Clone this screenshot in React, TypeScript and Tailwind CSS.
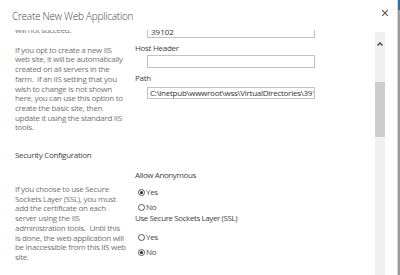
import React from "react";

const webSiteHelp = [
  "If you opt to create a new IIS",
  "web site, it will be automatically",
  "created on all servers in the",
  "farm.  If an IIS setting that you",
  "wish to change is not shown",
  "here, you can use this option to",
  "create the basic site, then",
  "update it using the standard IIS",
  "tools.",
];

const sslHelp = [
  "If you choose to use Secure",
  "Sockets Layer (SSL), you must",
  "add the certificate on each",
  "server using the IIS",
  "administration tools.  Until this",
  "is done, the web application will",
  "be inaccessible from this IIS web",
  "site.",
];

function Radio({ label, checked }: { label: string; checked?: boolean }) {
  return (
    <div className="flex items-center h-[14px] pl-[3px]">
      <span className="w-[7px] h-[7px] rounded-full border border-[#555] flex items-center justify-center bg-white">
        {checked && <span className="w-[3px] h-[3px] rounded-full bg-[#222]" />}
      </span>
      <span className="ml-[1px] text-[8px] tracking-[-0.3px] leading-[10px] text-[#444]">{label}</span>
    </div>
  );
}

function HelpLines({ lines }: { lines: string[] }) {
  return (
    <div className="text-[8px] tracking-[-0.3px] leading-[9.7px] text-[#747474] whitespace-pre">
      {lines.map((l, i) => (
        <div key={i}>{l}</div>
      ))}
    </div>
  );
}

export default function App() {
  return (
    <div
      className="w-[400px] h-[275px] flex bg-white overflow-hidden"
      style={{ fontFamily: '"Open Sans", "Noto Sans", sans-serif' }}
    >
      <div className="w-[397px] flex flex-col">
        {/* header */}
        <div className="h-[30px] flex items-start justify-between pl-[12px] pr-[8px]">
          <h1 className="mt-[7px] text-[10px] tracking-[-0.25px] font-light text-[#444] leading-[18px]">
            Create New Web Application
          </h1>
          <svg width="8" height="8" viewBox="0 0 8 8" className="mt-[9px]">
            <path d="M1.2 1.2 L6.8 6.8 M6.8 1.2 L1.2 6.8" stroke="#555" strokeWidth="1.1" />
          </svg>
        </div>

        <div className="flex-1 flex overflow-hidden">
          {/* scrolled content */}
          <div className="w-[375px] overflow-hidden">
            <div className="flex">
              <div className="w-[120px] pl-[15px]">
                <div className="-mt-[5px] text-[8px] tracking-[-0.3px] leading-[9.7px] text-[#747474]">will not succeed.</div>
                <div className="mt-[10px]">
                  <HelpLines lines={webSiteHelp} />
                </div>
              </div>
              <div className="flex flex-col pl-[15px]">
                <div className="-mt-[4px] ml-[12px] w-[168px] h-[12px] border border-[#c2c2c2] text-[8px] leading-[9px] pl-[3px] text-[#333]">
                  39102
                </div>
                <div className="mt-[5px] text-[8px] tracking-[-0.3px] leading-[10px] text-[#444]">Host Header</div>
                <div className="mt-[2px] ml-[12px] w-[168px] h-[13px] border border-[#c2c2c2]" />
                <div className="mt-[5px] text-[8px] tracking-[-0.3px] leading-[10px] text-[#444]">Path</div>
                <div className="mt-[4px] ml-[12px] w-[168px] h-[12px] border border-[#c2c2c2] overflow-hidden whitespace-nowrap text-[8px] tracking-[-0.25px] leading-[10px] pl-[2px] text-[#333]">
                  C:\inetpub\wwwroot\wss\VirtualDirectories\39102
                </div>
              </div>
            </div>

            <div className="mt-[18px] pl-[15px] text-[8px] tracking-[-0.3px] leading-[10px] text-[#444]">
              Security Configuration
            </div>

            <div className="flex mt-[10px]">
              <div className="w-[120px] pl-[15px] pt-[14px]">
                <HelpLines lines={sslHelp} />
              </div>
              <div className="pl-[15px]">
                <div className="text-[8px] tracking-[-0.4px] leading-[10px] text-[#444]">Allow Anonymous</div>
                <div className="mt-[5px] flex flex-col gap-[1px]">
                  <Radio label="Yes" checked />
                  <Radio label="No" />
                </div>
                <div className="text-[8px] tracking-[-0.4px] leading-[8px] text-[#444] whitespace-nowrap">
                  Use Secure Sockets Layer (SSL)
                </div>
                <div className="mt-[8px] flex flex-col gap-[1px]">
                  <Radio label="Yes" />
                  <Radio label="No" checked />
                </div>
              </div>
            </div>
          </div>

          {/* scrollbar */}
          <div className="w-[10px] mt-[2px] bg-[#f0f0f0] flex flex-col items-center">
            <svg width="8" height="6" viewBox="0 0 8 6" className="mt-[9px]">
              <path d="M1.5 4.5 L4 2 L6.5 4.5" stroke="#444" strokeWidth="1.4" fill="none" />
            </svg>
            <div className="mt-[35px] w-[10px] h-[55px] bg-[#cdcdcd]" />
          </div>
        </div>
      </div>

      {/* page behind the dialog */}
      <div className="w-[3px] flex flex-col border-l border-[#d8d8d8]">
        <div className="h-[10px] bg-[#2b6cb3]" />
        <div className="flex-1 bg-[#9c9c9c]" />
      </div>
    </div>
  );
}
